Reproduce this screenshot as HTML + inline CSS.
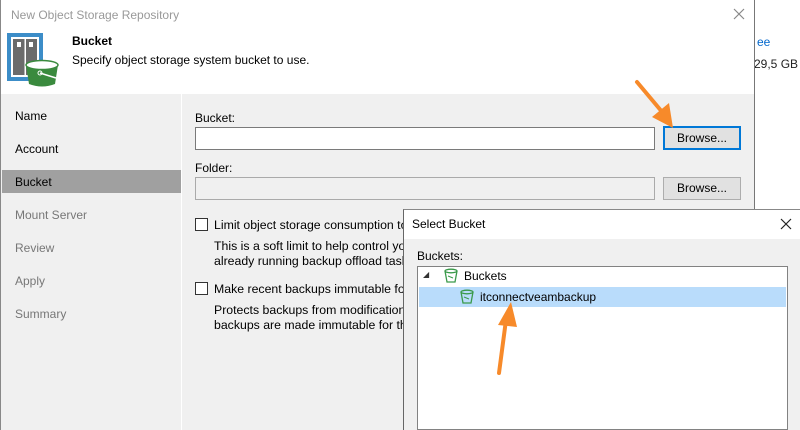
<!DOCTYPE html>
<html><head><meta charset="utf-8"><style>
*{margin:0;padding:0;box-sizing:border-box}
body{width:800px;height:430px;overflow:hidden;position:relative;background:#fff;font-family:"Liberation Sans",sans-serif;font-size:12px;color:#000}
.a{position:absolute;white-space:nowrap}
.inp{position:absolute;border:1px solid #7a7a7a;background:#fff}
.btn{position:absolute;border:1px solid #adadad;background:#e1e1e1;text-align:center;line-height:20px}
.cb{position:absolute;width:13px;height:13px;border:1px solid #333;background:#fff}
</style></head><body>
<div class="a" style="left:757px;top:35px;color:#0066cc">ee</div>
<div class="a" style="left:754px;top:57px;color:#222">29,5 GB</div>
<div class="a" style="left:0;top:0;width:755px;height:430px;background:#fff;border-left:1px solid #888;border-right:1px solid #777"></div>
<div class="a" style="left:11px;top:8px;color:#999;font-size:12px">New Object Storage Repository</div>
<svg class="a" style="left:733px;top:8px" width="12" height="12"><path d="M1 1L11 11M11 1L1 11" stroke="#888" stroke-width="1.2"/></svg>
<svg class="a" style="left:7px;top:33px" width="54" height="54">
<rect x="2" y="2" width="32" height="44" fill="#fff" stroke="#3c8dc8" stroke-width="4"/>
<rect x="6" y="6" width="24" height="36" fill="#6b6b6b"/>
<rect x="17.5" y="6" width="1.5" height="36" fill="#fff"/>
<rect x="10" y="9" width="4" height="5" fill="#fff"/><rect x="22" y="9" width="4" height="5" fill="#fff"/>
<path d="M19 32 Q35 27 51 32 L48 51 Q35 56 22 51 Z" fill="#3a8a3e"/>
<ellipse cx="35" cy="32" rx="16" ry="4.5" fill="#fff" stroke="#3a8a3e" stroke-width="1.5"/>
<path d="M33 40 L49 45" stroke="#fff" stroke-width="1.5"/><circle cx="33" cy="40" r="2" fill="none" stroke="#fff"/>
</svg>
<div class="a" style="left:72px;top:34px;font-weight:bold">Bucket</div>
<div class="a" style="left:72px;top:53px">Specify object storage system bucket to use.</div>
<div class="a" style="left:1px;top:94px;width:753px;height:336px;background:#f0f0f0"></div>
<div class="a" style="left:181px;top:94px;width:1px;height:336px;background:#fff"></div>
<div class="a" style="left:2px;top:170px;width:179px;height:23px;background:#a0a0a0"></div>
<div class="a" style="left:15px;top:109px">Name</div>
<div class="a" style="left:15px;top:142px">Account</div>
<div class="a" style="left:15px;top:175px">Bucket</div>
<div class="a" style="left:15px;top:208px;color:#777">Mount Server</div>
<div class="a" style="left:15px;top:241px;color:#777">Review</div>
<div class="a" style="left:15px;top:274px;color:#777">Apply</div>
<div class="a" style="left:15px;top:307px;color:#777">Summary</div>
<div class="a" style="left:195px;top:111px">Bucket:</div>
<div class="inp" style="left:195px;top:127px;width:460px;height:23px"></div>
<div class="btn" style="left:663px;top:126px;width:78px;height:24px;border:2px solid #0078d7;line-height:20px">Browse...</div>
<div class="a" style="left:195px;top:161px">Folder:</div>
<div class="inp" style="left:195px;top:177px;width:460px;height:23px;background:#f0f0f0;border-color:#aaa"></div>
<div class="btn" style="left:663px;top:177px;width:78px;height:23px">Browse...</div>
<div class="cb" style="left:195px;top:218px"></div>
<div class="a" style="left:214px;top:218px;font-size:12.3px">Limit object storage consumption to</div>
<div class="a" style="left:214px;top:239px;font-size:12.3px">This is a soft limit to help control yo</div>
<div class="a" style="left:214px;top:254px;font-size:12.3px">already running backup offload task</div>
<div class="cb" style="left:195px;top:282px"></div>
<div class="a" style="left:214px;top:282px;font-size:12.3px">Make recent backups immutable for</div>
<div class="a" style="left:214px;top:303px;font-size:12.3px">Protects backups from modification</div>
<div class="a" style="left:214px;top:318px;font-size:12.3px">backups are made immutable for th</div>
<div class="a" style="left:403px;top:209px;width:397px;height:221px;background:#f0f0f0;border-left:1px solid #666;border-top:1px solid #888"></div>
<div class="a" style="left:404px;top:210px;width:396px;height:29px;background:#fff"></div>
<div class="a" style="left:412px;top:217px">Select Bucket</div>
<svg class="a" style="left:780px;top:218px" width="12" height="12"><path d="M1 1L11 11M11 1L1 11" stroke="#222" stroke-width="1.2"/></svg>
<div class="a" style="left:417px;top:249px">Buckets:</div>
<div class="a" style="left:417px;top:266px;width:371px;height:164px;background:#fff;border:1px solid #828282"></div>
<div class="a" style="left:419px;top:287px;width:367px;height:20px;background:#b9dcfb"></div>
<div class="a" style="left:423px;top:270px;font-size:8px;color:#333">◢</div>
<svg class="a" style="left:443px;top:268px" width="16" height="16"><path d="M2 3 L4 14 H12 L14 3" fill="none" stroke="#3a9a4a" stroke-width="1.3"/><ellipse cx="8" cy="3" rx="6" ry="1.8" fill="none" stroke="#3a9a4a" stroke-width="1.3"/><path d="M5 8 L10 10" stroke="#3a9a4a"/></svg>
<div class="a" style="left:464px;top:269px">Buckets</div>
<svg class="a" style="left:459px;top:289px" width="16" height="16"><path d="M2 3 L4 14 H12 L14 3" fill="none" stroke="#3a9a4a" stroke-width="1.3"/><ellipse cx="8" cy="3" rx="6" ry="1.8" fill="none" stroke="#3a9a4a" stroke-width="1.3"/><path d="M5 8 L10 10" stroke="#3a9a4a"/></svg>
<div class="a" style="left:480px;top:290px">itconnectveambackup</div>
<svg class="a" style="left:0;top:0" width="800" height="430">
<line x1="637" y1="82" x2="663" y2="113" stroke="#f78a2a" stroke-width="4" stroke-linecap="round"/>
<polygon points="673,128 652,117 669,103" fill="#f78a2a"/>
<line x1="499" y1="373" x2="506" y2="320" stroke="#f78a2a" stroke-width="4" stroke-linecap="round"/>
<polygon points="511,302 498,325 517,327" fill="#f78a2a"/>
</svg>
</body></html>
